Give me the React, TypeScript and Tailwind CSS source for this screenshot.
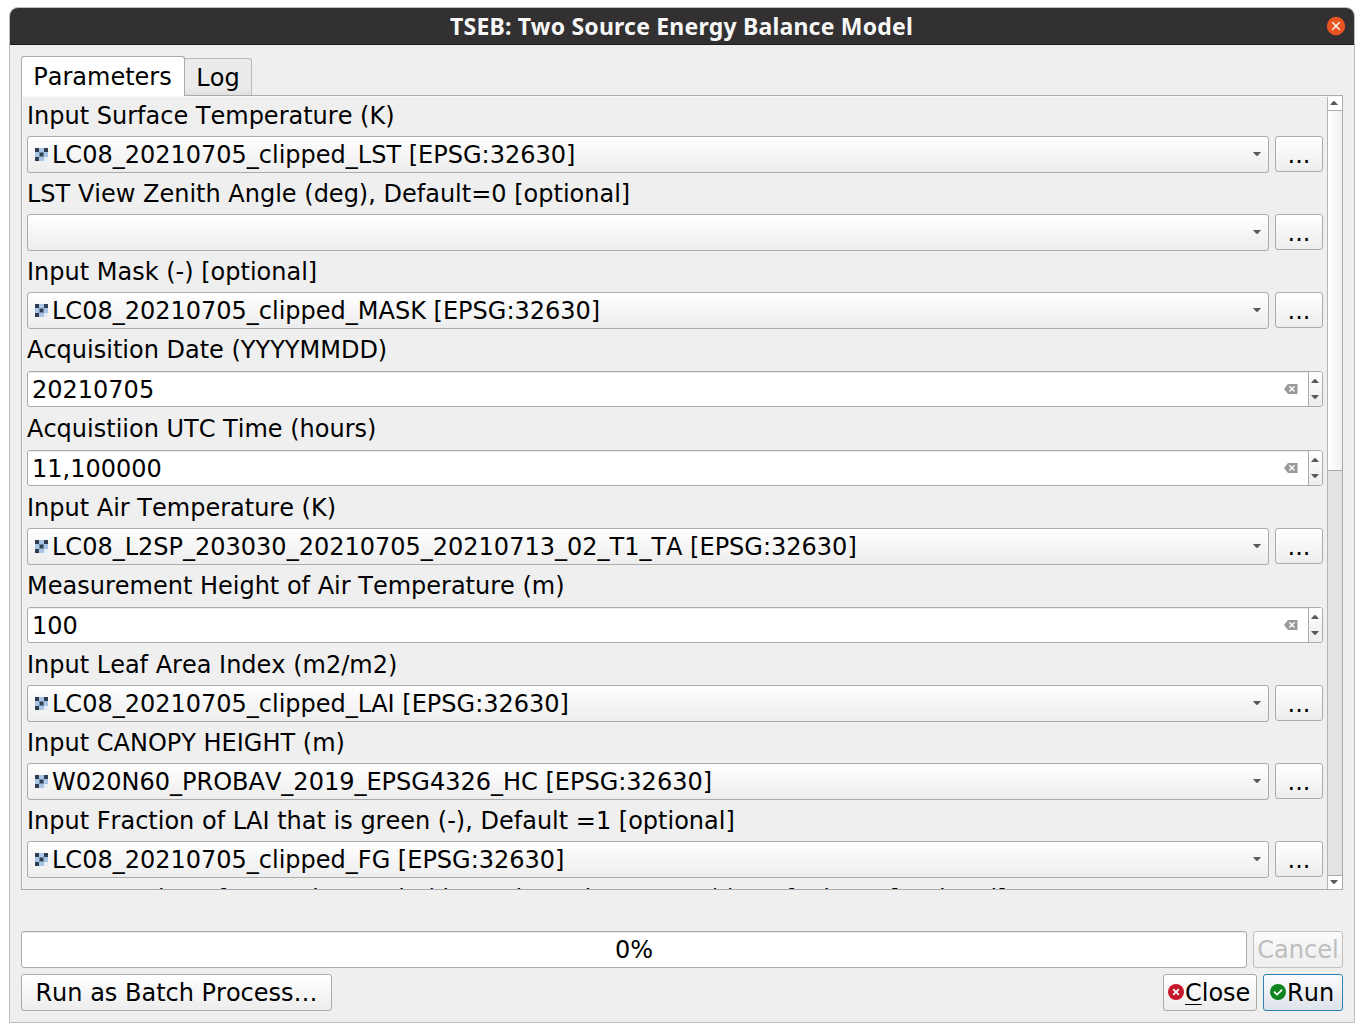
import React from "react";

type Kind = "combo" | "spin";
const rows: { label: string; kind: Kind; value: string }[] = [
  { label: "Input Surface Temperature (K)", kind: "combo", value: "LC08_20210705_clipped_LST [EPSG:32630]" },
  { label: "LST View Zenith Angle (deg), Default=0 [optional]", kind: "combo", value: "" },
  { label: "Input Mask (-) [optional]", kind: "combo", value: "LC08_20210705_clipped_MASK [EPSG:32630]" },
  { label: "Acquisition Date (YYYYMMDD)", kind: "spin", value: "20210705" },
  { label: "Acquistiion UTC Time (hours)", kind: "spin", value: "11,100000" },
  { label: "Input Air Temperature (K)", kind: "combo", value: "LC08_L2SP_203030_20210705_20210713_02_T1_TA [EPSG:32630]" },
  { label: "Measurement Height of Air Temperature (m)", kind: "spin", value: "100" },
  { label: "Input Leaf Area Index (m2/m2)", kind: "combo", value: "LC08_20210705_clipped_LAI [EPSG:32630]" },
  { label: "Input CANOPY HEIGHT (m)", kind: "combo", value: "W020N60_PROBAV_2019_EPSG4326_HC [EPSG:32630]" },
  { label: "Input Fraction of LAI that is green (-), Default =1 [optional]", kind: "combo", value: "LC08_20210705_clipped_FG [EPSG:32630]" },
];

const button = "rounded-[3px] border border-[#ababab] bg-linear-to-b from-white to-[#ededed]";

function Arrow({ up = false }: { up?: boolean }) {
  return (
    <svg width="8" height="4" viewBox="0 0 8 4" className="block shrink-0">
      <path d={up ? "M0 4L3 .5Q4-.3 5 .5L8 4Z" : "M0 0L3 3.5Q4 4.3 5 3.5L8 0Z"} fill="#5a5a5a" />
    </svg>
  );
}

function RasterIcon() {
  return (
    <svg width="13" height="13" viewBox="0 0 13 13" className="block shrink-0" shapeRendering="crispEdges">
      <rect width="13" height="13" fill="#a9c4e4" />
      <path d="M0 0h4v4H0zM9 0h4v4H9zM0 9h4v4H0z" fill="#2e3e50" />
      <path d="M5 5h3v3H5z" fill="#2e3e50" />
      <path d="M4 4h5v1H4zM4 8h5v1H4zM4 5h1v3H4zM8 5h1v3H8z" fill="#6f88a6" />
      <path d="M9 9h4v4H9z" fill="#e8eef6" />
    </svg>
  );
}

function Combo({ value }: { value: string }) {
  return (
    <div className="flex h-[37px] gap-[6px]">
      <div className={`flex w-[1242px] items-center pl-[7px] pr-[7px] ${button}`}>
        {value && <RasterIcon />}
        <span className="ml-[4px] flex-1 whitespace-pre">{value}</span>
        <div className="pb-px">
          <Arrow />
        </div>
      </div>
      <div className={`flex h-[36px] w-[48px] items-center justify-center pt-[2px] ${button}`}>...</div>
    </div>
  );
}

function Spin({ value }: { value: string }) {
  return (
    <div className="py-px">
      <div className="flex h-[36px] w-[1296px] overflow-hidden rounded-[3px] border border-[#ababab] bg-white">
        <div className="flex flex-1 items-center pl-[4px] pr-[10px] shadow-[inset_0_1px_0_#ececec]">
          <span className="flex-1 pt-[2px]">{value}</span>
          <svg width="14" height="10" viewBox="0 0 14 10">
            <path d="M4 0H13.5V10H4L0 5Z" fill="#999" />
            <path d="M5.3 2.3l5.2 5.2M10.5 2.3L5.3 7.5" stroke="#fff" strokeWidth="1.4" />
          </svg>
        </div>
        <div className="flex w-[14px] flex-col items-center justify-between border-l border-[#ababab] bg-linear-to-b from-white to-[#ededed] pt-[7px] pb-[7px] pr-px">
          <Arrow up />
          <Arrow />
        </div>
      </div>
    </div>
  );
}

export default function App() {
  return (
    <div className="h-[1032px] w-[1364px] overflow-hidden bg-white pl-[9px] pt-[7px] font-['DejaVu_Sans',sans-serif] text-[24px] leading-[28px] text-black [font-kerning:none]">
      <div className="flex h-[1016px] w-[1346px] flex-col overflow-hidden rounded-t-[9px] border border-[#bdbdbd] bg-[#efefef]">
        <header className="flex h-[37px] shrink-0 items-center border-b border-[#1c1a1b] bg-[#323031] pr-[8px]">
          <h1 className="flex-1 pl-[27px] text-center font-['Noto_Sans',sans-serif] text-[23px] font-bold tracking-[0.2px] text-[#f7f7f7] [font-kerning:normal]">
            <span className="whitespace-nowrap">TSEB: Two Source Energy Balance Model</span>
          </h1>
          <svg width="20" height="20" viewBox="0 0 20 20">
            <circle cx="10" cy="10" r="9.2" fill="#e95420" />
            <path d="M6.3 6.3l7.4 7.4M13.7 6.3l-7.4 7.4" stroke="#fff" strokeWidth="1.4" />
          </svg>
        </header>

        <main className="flex flex-1 flex-col pl-[11px] pr-[11px] pt-[11px]">
          <nav className="z-10 -mb-px flex h-[40px] shrink-0 items-start">
            <div className="flex h-[40px] w-[164px] items-center justify-center rounded-t-[3px] border border-b-0 border-[#ababab] bg-white pr-px">Parameters</div>
            <div className="mt-[2px] flex h-[37px] w-[67px] items-center justify-center rounded-tr-[3px] border border-b-0 border-l-0 border-[#bababa] bg-linear-to-b from-[#ebebeb] from-80% to-[#e0e0e0] pt-[2px]">Log</div>
          </nav>
          <section className="flex h-[795px] shrink-0 border border-[#ababab] shadow-[inset_1px_1px_0_#f8f8f8]">
            <div className="-mt-px h-[794px] flex-1 overflow-hidden pl-[5px]">
              {rows.map((r) => (
                <div key={r.label}>
                  <div className="flex h-[41px] items-center whitespace-pre">{r.label}</div>
                  {r.kind === "combo" ? <Combo value={r.value} /> : <Spin value={r.value} />}
                </div>
              ))}
              <div className="flex h-[41px] items-center tracking-[0.03px] whitespace-pre">Input Fraction of ground occupied by a clumpde canopy (-), Default =1 [optional]</div>
            </div>
            <div className="mt-px flex w-[15px] flex-col border-l border-[#b5b5b5] bg-[#e3e3e3]">
              <div className="flex h-[14px] shrink-0 items-center justify-center border-b border-[#ababab] bg-white pr-[2px] pb-[2px]"><Arrow up /></div>
              <div className="h-[360px] shrink-0 border-b border-[#ababab] bg-linear-to-r from-white to-[#f1f1f1]" />
              <div className="flex-1" />
              <div className="flex h-[14px] shrink-0 items-center justify-center border-t border-[#ababab] bg-white pr-[2px] pb-[2px]"><Arrow /></div>
            </div>
          </section>

          <div className="mt-[41px] flex h-[37px] shrink-0 gap-[6px]">
            <div className="flex flex-1 items-center justify-center rounded-[3px] border border-[#ababab] bg-white shadow-[inset_0_1px_0_#ececec]">0%</div>
            <div className="flex w-[90px] items-center justify-center rounded-[3px] border border-[#c0c0c0] bg-linear-to-b from-[#fbfbfb] to-[#eeeeee] text-[#bebebe]">Cancel</div>
          </div>
          <div className="mt-[6px] flex h-[37px] shrink-0">
            <div className={`flex w-[311px] items-center justify-center ${button}`}>Run as Batch Process…</div>
            <div className={`ml-auto flex w-[94px] items-center pl-[4px] ${button}`}>
              <svg width="16" height="16" viewBox="0 0 16 16" className="mr-px mb-px shrink-0">
                <circle cx="8" cy="8" r="8" fill="#c7162b" />
                <path d="M5.2 5.2l5.6 5.6M10.8 5.2l-5.6 5.6" stroke="#fff" strokeWidth="1.8" />
              </svg>
              <span className="underline decoration-1 underline-offset-[3px] [text-decoration-skip-ink:none]">C</span>lose
            </div>
            <div className="ml-[6px] flex w-[80px] items-center rounded-[3px] border border-[#2a7fb5] bg-linear-to-b from-[#fbfcfd] to-[#dce3ea] pl-[6px]">
              <svg width="16" height="16" viewBox="0 0 16 16" className="mb-px shrink-0">
                <circle cx="8" cy="8" r="8" fill="#0e8420" />
                <path d="M4 7.6l3 3 5.2-5" fill="none" stroke="#fff" strokeWidth="1.6" />
              </svg>
              <span className="ml-px">Run</span>
            </div>
          </div>
        </main>
      </div>
    </div>
  );
}
